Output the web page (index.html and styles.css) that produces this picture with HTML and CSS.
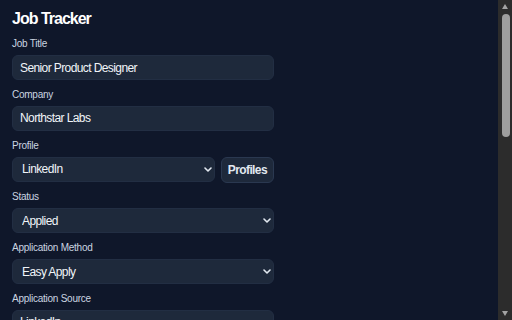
FILE: index.html
```html
<!DOCTYPE html>
<html lang="en">
<head>
<meta charset="utf-8">
<title>Job Tracker</title>
<link rel="stylesheet" href="styles.css">
</head>
<body>
<main class="app">
  <h1 class="title">Job Tracker</h1>
  <form class="form">
    <div class="field">
      <label class="label" for="title">Job Title</label>
      <input class="control" id="title" type="text" value="Senior Product Designer">
    </div>
    <div class="field">
      <label class="label" for="company">Company</label>
      <input class="control" id="company" type="text" value="Northstar Labs">
    </div>
    <div class="field">
      <label class="label" for="profile">Profile</label>
      <div class="row">
        <div class="select-wrap grow">
          <select class="control select" id="profile">
            <option>LinkedIn</option>
            <option>Indeed</option>
          </select>
          <svg class="chev" width="8" height="5" viewBox="0 0 8 5"><path d="M1 1l3 3 3-3" fill="none" stroke="currentColor" stroke-width="1.6" stroke-linecap="round" stroke-linejoin="round"/></svg>
        </div>
        <button class="btn" type="button">Profiles</button>
      </div>
    </div>
    <div class="field">
      <label class="label" for="status">Status</label>
      <div class="select-wrap">
        <select class="control select" id="status">
          <option>Applied</option>
          <option>Interviewing</option>
          <option>Offer</option>
          <option>Rejected</option>
        </select>
        <svg class="chev" width="8" height="5" viewBox="0 0 8 5"><path d="M1 1l3 3 3-3" fill="none" stroke="currentColor" stroke-width="1.6" stroke-linecap="round" stroke-linejoin="round"/></svg>
      </div>
    </div>
    <div class="field">
      <label class="label" for="method">Application Method</label>
      <div class="select-wrap">
        <select class="control select" id="method">
          <option>Easy Apply</option>
          <option>Company Website</option>
          <option>Referral</option>
        </select>
        <svg class="chev" width="8" height="5" viewBox="0 0 8 5"><path d="M1 1l3 3 3-3" fill="none" stroke="currentColor" stroke-width="1.6" stroke-linecap="round" stroke-linejoin="round"/></svg>
      </div>
    </div>
    <div class="field">
      <label class="label" for="source">Application Source</label>
      <input class="control" id="source" type="text" value="LinkedIn">
    </div>
    <div class="field">
      <label class="label" for="url">Job URL</label>
      <input class="control" id="url" type="text" value="https://northstarlabs.com/careers/senior-product-designer">
    </div>
    <div class="field">
      <label class="label" for="location">Location</label>
      <input class="control" id="location" type="text" value="Remote">
    </div>
    <div class="field">
      <label class="label" for="salary">Salary Range</label>
      <input class="control" id="salary" type="text" value="$140k – $165k">
    </div>
    <div class="field">
      <label class="label" for="date">Date Applied</label>
      <input class="control" id="date" type="text" value="2024-05-14">
    </div>
    <div class="field">
      <label class="label" for="notes">Notes</label>
      <textarea class="control area" id="notes">Recruiter reached out on LinkedIn.</textarea>
    </div>
    <button class="btn primary" type="button">Save Application</button>
  </form>
</main>
<div class="scrollbar" aria-hidden="true">
  <span class="arrow up"></span>
  <span class="thumb"></span>
  <span class="arrow down"></span>
</div>
</body>
</html>
```

FILE: styles.css
```css
html {
  background: #0f172a;
}
body {
  margin: 0;
  padding: 10px 12px 14px;
  background: #0f172a;
  color: #f1f5f9;
  font-family: "Liberation Sans", Arial, sans-serif;
}
.app {
  width: 262px;
}
.title {
  margin: 0 0 10px;
  font-size: 16px;
  line-height: 18px;
  font-weight: 700;
  letter-spacing: -1px;
  color: #ffffff;
}
.form {
  display: flex;
  flex-direction: column;
  gap: 8.8px;
}
.field {
  display: flex;
  flex-direction: column;
}
.label {
  font-size: 10px;
  line-height: 12px;
  letter-spacing: -0.25px;
  color: #cbd5e1;
  margin-bottom: 5px;
}
.control {
  box-sizing: border-box;
  display: block;
  height: 25px;
  width: 100%;
  margin: 0;
  padding: 0 7px;
  border: 1px solid #222e43;
  border-radius: 6px;
  background: #1e293b;
  color: #f1f5f9;
  font-family: "Liberation Sans", Arial, sans-serif;
  font-size: 12px;
  letter-spacing: -0.6px;
  outline: none;
}
.select-wrap {
  position: relative;
}
.select {
  appearance: none;
  -webkit-appearance: none;
  padding: 0 16px 0 9px;
}
.chev {
  position: absolute;
  right: 3px;
  top: 10px;
  color: #e2e8f0;
  pointer-events: none;
}
.area {
  height: 80px;
  padding: 6px 7px;
  resize: none;
}
.row {
  display: flex;
  gap: 6px;
}
.grow {
  flex: 1;
  min-width: 0;
}
.btn {
  box-sizing: border-box;
  height: 26px;
  margin: 0;
  padding: 0 6px;
  border: 1px solid #2a3850;
  border-radius: 6px;
  background: #1e293b;
  color: #e2e8f0;
  font-family: "Liberation Sans", Arial, sans-serif;
  font-size: 12px;
  font-weight: 700;
  letter-spacing: -0.6px;
}
.primary {
  height: 30px;
  margin-top: 4px;
  background: #2563eb;
  border-color: #2563eb;
  color: #ffffff;
}
.scrollbar {
  position: fixed;
  top: 0;
  right: 0;
  width: 14px;
  height: 100vh;
  background: #2c2c2c;
}
.thumb {
  position: absolute;
  left: 4px;
  top: 14px;
  width: 8px;
  height: 123px;
  border-radius: 4px;
  background: #9e9e9e;
}
.arrow {
  position: absolute;
  left: 4px;
  width: 0;
  height: 0;
  border-left: 3.5px solid transparent;
  border-right: 3.5px solid transparent;
}
.up {
  top: 4px;
  border-bottom: 5px solid #a3a3a3;
}
.down {
  bottom: 4px;
  border-top: 5px solid #a3a3a3;
}
```
